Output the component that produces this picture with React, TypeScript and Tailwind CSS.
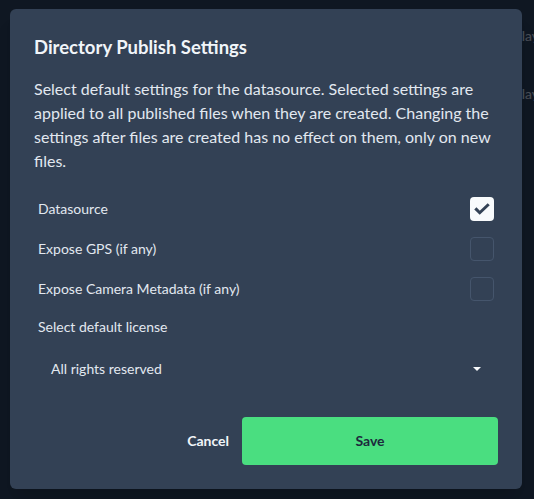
import { useState } from 'react';

const font = { fontFamily: '"Lato", "Noto Sans", sans-serif' };

const options = [
  { key: 'datasource', label: 'Datasource', checked: true },
  { key: 'gps', label: 'Expose GPS (if any)', checked: false },
  { key: 'camera', label: 'Expose Camera Metadata (if any)', checked: false },
];

const CheckIcon = () => (
  <svg viewBox="0 0 24 24" className="h-[18px] w-[18px]" fill="none" stroke="#334155" strokeWidth={4} strokeLinecap="square">
    <path d="M4.5 12.5l4.5 4.5L19.5 7" />
  </svg>
);

export default function App() {
  const [values, setValues] = useState<Record<string, boolean>>(
    Object.fromEntries(options.map((o) => [o.key, o.checked]))
  );

  return (
    <div className="relative h-[499px] w-[534px] overflow-hidden bg-[#1f2937]" style={font}>
      {/* page underneath the dialog */}
      <div className="flex flex-col gap-[38px] pl-[494px] pt-[26px] text-sm text-white">
        <span>Display</span>
        <span>Display</span>
      </div>

      {/* backdrop + dialog */}
      <div className="absolute inset-0 flex bg-[#0b111c]/75 pl-[10px] pt-[9px]">
        <div className="h-fit w-[512px] rounded-md bg-[#334155] p-6 shadow-xl">
          <h2 className="text-[18.5px] leading-7 font-bold text-slate-100">Directory Publish Settings</h2>
          <p className="mt-4 text-base leading-6 text-slate-200">
            Select default settings for the datasource. Selected settings are applied to all published files
            when they are created. Changing the settings after files are created has no effect on them, only on
            new files.
          </p>

          <div className="mt-4 flex flex-col px-1">
            {options.map((o) => (
              <label key={o.key} className="flex cursor-pointer items-center justify-between py-2">
                <span className="text-sm leading-5 text-slate-200">{o.label}</span>
                <button
                  type="button"
                  onClick={() => setValues((v) => ({ ...v, [o.key]: !v[o.key] }))}
                  className={
                    values[o.key]
                      ? 'flex h-6 w-6 items-center justify-center rounded bg-slate-50'
                      : 'flex h-6 w-6 items-center justify-center rounded border border-slate-600'
                  }
                >
                  {values[o.key] && <CheckIcon />}
                </button>
              </label>
            ))}

            <span className="mt-2 text-sm leading-5 text-slate-200">Select default license</span>
            <div className="mt-2 flex h-12 items-center justify-between pl-[13px] pr-3">
              <span className="text-sm text-slate-200">All rights reserved</span>
              <svg viewBox="0 0 8 4" className="mr-[1px] h-1 w-2" fill="#f8fafc">
                <path d="M0 0h8L4 4z" />
              </svg>
            </div>
          </div>

          <div className="mt-6 flex items-center justify-end">
            <button className="px-[13px] text-sm font-bold text-slate-100">Cancel</button>
            <button className="h-12 w-64 rounded bg-[#4ade80] text-sm font-bold text-slate-800">Save</button>
          </div>
        </div>
      </div>
    </div>
  );
}
